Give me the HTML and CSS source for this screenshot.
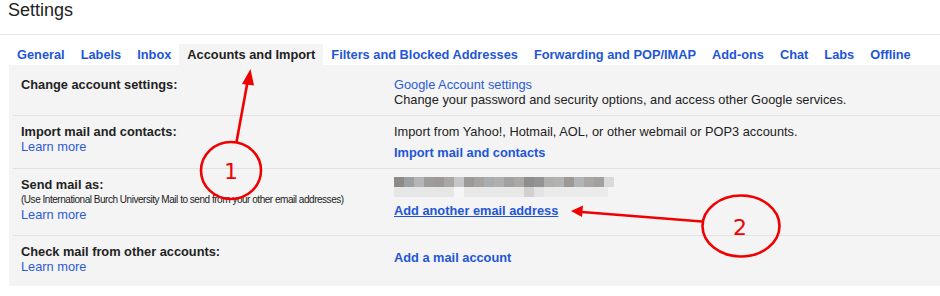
FILE: index.html
```html
<!DOCTYPE html>
<html>
<head>
<meta charset="utf-8">
<title>Settings</title>
<link rel="stylesheet" href="styles.css">
</head>
<body>
<div class="page">
  <header class="header">Settings</header>
  <nav class="tabs">
    <a class="tab">General</a>
    <a class="tab">Labels</a>
    <a class="tab">Inbox</a>
    <a class="tab active">Accounts and Import</a>
    <a class="tab">Filters and Blocked Addresses</a>
    <a class="tab">Forwarding and POP/IMAP</a>
    <a class="tab">Add-ons</a>
    <a class="tab">Chat</a>
    <a class="tab">Labs</a>
    <a class="tab">Offline</a>
  </nav>
  <section class="panel">
    <div class="row">
      <div class="label-col">
        <div class="label">Change account settings:</div>
      </div>
      <div class="value-col">
        <a class="link">Google Account settings</a>
        <div class="text">Change your password and security options, and access other Google services.</div>
      </div>
    </div>
    <div class="row">
      <div class="label-col">
        <div class="label">Import mail and contacts:</div>
        <a class="link">Learn more</a>
      </div>
      <div class="value-col">
        <div class="text">Import from Yahoo!, Hotmail, AOL, or other webmail or POP3 accounts.</div>
        <a class="action">Import mail and contacts</a>
      </div>
    </div>
    <div class="row row-tall">
      <div class="label-col">
        <div class="label">Send mail as:</div>
        <div class="note">(Use International Burch University Mail to send from your other email addresses)</div>
        <a class="link">Learn more</a>
      </div>
      <div class="value-col">
        <div class="blurred"></div>
        <a class="action underline">Add another email address</a>
      </div>
    </div>
    <div class="row">
      <div class="label-col">
        <div class="label">Check mail from other accounts:</div>
        <a class="link">Learn more</a>
      </div>
      <div class="value-col">
        <a class="action">Add a mail account</a>
      </div>
    </div>
  </section>
  <svg class="annotations" width="940" height="296" viewBox="0 0 940 296">
    <line x1="236.5" y1="142" x2="247.5" y2="82" class="stroke"/>
    <polygon points="250.5,69 242,84 254,85.5" class="fill"/>
    <ellipse cx="231" cy="170.5" rx="30" ry="28.5" class="stroke"/>
    <text x="231" y="179" class="num">1</text>
    <line x1="702" y1="221.5" x2="582" y2="212" class="stroke"/>
    <polygon points="571,211 583,205.5 582,217" class="fill"/>
    <ellipse cx="741" cy="226" rx="38.5" ry="30.5" class="stroke"/>
    <text x="740" y="234.5" class="num">2</text>
  </svg>
</div>
</body>
</html>
```
FILE: styles.css
```css
html, body {
  margin: 0;
  padding: 0;
  background: #ffffff;
}

.page {
  position: relative;
  width: 940px;
  height: 296px;
  overflow: hidden;
  font-family: "Liberation Sans", Arial, sans-serif;
  color: #222222;
}

.header {
  height: 34px;
  padding-left: 8px;
  font-size: 18px;
  line-height: 20px;
  color: #222222;
  border-bottom: 1px solid #e5e5e5;
}

.tabs {
  display: flex;
  margin-top: 9px;
  padding-left: 9px;
}

.tab {
  padding: 3px 8px;
  font-size: 12.8px;
  line-height: 15px;
  font-weight: bold;
  color: #1f56d8;
  white-space: nowrap;
}

.tab.active {
  background: #f4f4f4;
  color: #222222;
}

.panel {
  margin-left: 9px;
  padding: 4px 0 4px 4px;
  background: #f4f4f4;
  height: 213px;
}

.row {
  display: grid;
  grid-template-columns: 373px 1fr;
  padding: 8px;
  border-top: 1px solid #e1e1e1;
  font-size: 12.8px;
  line-height: 15px;
}

.row:first-child {
  border-top: none;
}

.row-tall {
  padding-bottom: 13px;
}

.label-col,
.value-col {
  display: flex;
  flex-direction: column;
  align-items: flex-start;
}

.label {
  font-weight: bold;
  color: #222222;
}

.note {
  font-size: 10px;
  line-height: 15px;
  letter-spacing: -0.47px;
  color: #222222;
  white-space: nowrap;
}

.link {
  color: #2a5bd7;
}

.text {
  color: #222222;
}

.action {
  margin-top: 6px;
  font-weight: bold;
  color: #1f56d8;
}

.action.underline {
  text-decoration: underline;
}

.blurred {
  width: 220px;
  height: 20px;
  background:
    linear-gradient(to right,
      #8f8a88 0 10px, #9aa0a4 10px 20px, #b5b5b7 20px 30px, #9f9c9c 30px 40px,
      #9e9a9a 40px 50px, #aaa7a5 50px 60px, #c6c6c8 60px 70px, #9c9999 70px 80px,
      #a6a3a1 80px 90px, #aaadb0 90px 100px, #b0b0b0 100px 110px, #a3a0a0 110px 120px,
      #aaa9a7 120px 130px, #8f8e8e 130px 140px, #939394 140px 150px, #b0b0af 150px 160px,
      #b4b3b3 160px 170px, #9f9996 170px 180px, #b2b4b8 180px 190px, #a9a6a4 190px 200px,
      #a3a1a0 200px 210px, #d8dadc 210px 220px) top left / 220px 10px no-repeat,
    linear-gradient(to right,
      #e6e6e6 0 60px, #f6f6f6 60px 70px, #e8e8e8 70px 130px, #d2cfce 130px 140px,
      #e3e3e5 140px 150px, #ebebeb 150px 214px, #f4f4f4 214px 220px) bottom left / 220px 10px no-repeat;
}

.annotations {
  position: absolute;
  left: 0;
  top: 0;
  pointer-events: none;
}

.annotations .stroke {
  fill: none;
  stroke: #f00000;
  stroke-width: 2.6;
}

.annotations .fill {
  fill: #f00000;
}

.annotations .num {
  font-family: "DejaVu Sans", sans-serif;
  font-size: 22px;
  fill: #f00000;
  text-anchor: middle;
}
```
